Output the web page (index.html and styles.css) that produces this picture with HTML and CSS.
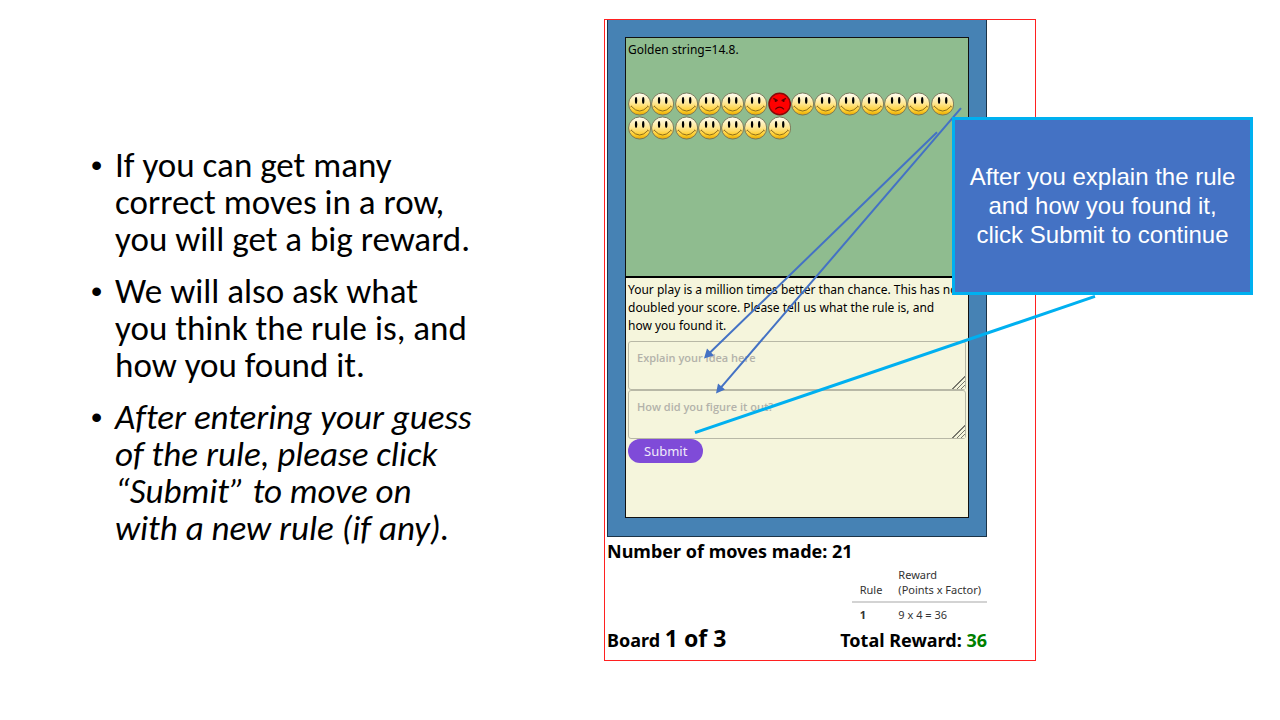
FILE: index.html
```html
<!DOCTYPE html>
<html lang="en">
<head>
<meta charset="utf-8">
<title>Explaining the rule</title>
<link rel="stylesheet" href="styles.css">
</head>
<body>
<main class="slide">
  <ul class="points">
    <li>If you can get many<br>correct moves in a row,<br>you will get a big reward.</li>
    <li>We will also ask what<br>you think the rule is, and<br>how you found it.</li>
    <li class="emphasis">After entering your guess<br>of the rule, please click<br>“Submit” to move on<br>with a new rule (if any).</li>
  </ul>

  <section class="frame">
    <div class="board">
      <div class="play">
        <p class="text">Golden string=14.8.</p>
        <div class="faces" id="faces"></div>
      </div>
      <form class="guess">
        <p class="text">Your play is a million times better than chance. This has now<br>doubled your score. Please tell us what the rule is, and<br>how you found it.</p>
        <textarea class="answer" aria-label="Explain your idea" placeholder="Explain your idea here"></textarea>
        <textarea class="answer" aria-label="How you figured it out" placeholder="How did you figure it out?"></textarea>
        <button class="submit" type="button">Submit</button>
      </form>
    </div>
    <div class="status">
      <h2 class="moves">Number of moves made: 21</h2>
      <table class="rewards">
        <thead><tr><th>Rule</th><th>Reward<br>(Points x Factor)</th></tr></thead>
        <tbody><tr><td><b>1</b></td><td>9 x 4 = 36</td></tr></tbody>
      </table>
      <div class="totals">
        <span>Board <span class="count">1 of 3</span></span>
        <span>Total Reward: <span class="points-won">36</span></span>
      </div>
    </div>
    <svg class="pointers" viewBox="0 0 432 641" preserveAspectRatio="none" aria-hidden="true">
      <g stroke="#4472c4" stroke-width="2" fill="#4472c4">
        <path d="M357 89 116 369M333 113 104 335"/>
        <path stroke="none" d="M112 374 114 364 121 370ZM100 339 103 329 110 336Z"/>
      </g>
      <path d="M491 277 91 413" stroke="#00b0f0" stroke-width="3"/>
    </svg>
    <div class="callout">After you explain the rule<br>and how you found it,<br>click Submit to continue</div>
  </section>
</main>

<svg class="symbols" aria-hidden="true">
  <defs>
    <linearGradient id="gold" x1="0" y1="0" x2="0" y2="1">
      <stop offset="0" stop-color="#fffef5"/>
      <stop offset=".45" stop-color="#ffe99a"/>
      <stop offset=".8" stop-color="#ffce2e"/>
      <stop offset="1" stop-color="#e5a800"/>
    </linearGradient>
    <symbol id="happy" viewBox="0 0 24 24">
      <circle cx="12" cy="12" r="11.400" fill="url(#gold)" stroke="#77765a"/>
      <ellipse cx="8.300" cy="8.300" rx="1.200" ry="3.500"/>
      <ellipse cx="15.700" cy="8.300" rx="1.200" ry="3.500"/>
      <path d="M3.500 14.500Q12 24 20.500 14.500M2.600 15l1.600-1M19.800 14l1.600 1" fill="none" stroke="#8a6a1c"/>
    </symbol>
    <symbol id="angry" viewBox="0 0 24 24">
      <circle cx="12" cy="12" r="11" fill="#f00" stroke="#8a0808" stroke-width="1.500"/>
      <path d="M5.500 6.200 10 8.500M18.500 6.200 14 8.500M7.500 17.500Q12 13 16.500 17.500" fill="none" stroke="#650000" stroke-width="1.300"/>
      <circle cx="8" cy="8.700" r="1.200" fill="#500"/>
      <circle cx="16" cy="8.700" r="1.200" fill="#500"/>
    </symbol>
  </defs>
</svg>
<script src="faces.js"></script>
</body>
</html>
```

FILE: styles.css
```css
* { box-sizing: border-box; }
body { margin: 0; background: #fff; color: #000; font-family: "Noto Sans", "Open Sans", sans-serif; }

.slide {
  display: grid;
  grid-template-columns: minmax(0, 604fr) minmax(0, 432fr) minmax(0, 244fr);
  align-items: start;
  min-height: 100vh;
  padding-top: 19px;
}

.points {
  margin: 128px 0 0;
  padding: 0 0 0 115px;
  list-style: none;
  font: 35px/37px Carlito, Calibri, Lato, sans-serif;
  font-variant-ligatures: none;
}
.points li { position: relative; margin-bottom: 15px; white-space: nowrap; }
.points li::before { content: "•"; position: absolute; left: -24px; font: 32px/37px "Liberation Sans", Arial, sans-serif; }
.emphasis { font-style: italic; }

.frame { position: relative; border: 1px solid #ff2020; padding: 0 48px 5px 2px; }

.board {
  background: #4682b4;
  border: 1px solid #1b3448;
  border-top: 0;
  padding: 17px 17px 18px;
}
.play {
  height: 241px;
  padding: 3px 2px;
  background: #8fbc8f;
  border: 1px solid #111;
  border-bottom: 2px solid #000;
}
.text { margin: 0; font-size: 12px; line-height: 18px; white-space: nowrap; }
.faces { display: grid; grid-template-columns: repeat(14, 1fr); padding: 33px 12px 0 0; }
.face { display: block; width: 100%; height: 24px; }

.guess {
  height: 240px;
  padding: 3px 2px;
  background: #f5f5dc;
  border: 1px solid #111;
  border-top: 0;
  overflow: hidden;
}
.text + .answer { margin-top: 6px; }
.answer {
  display: block;
  width: 100%;
  height: 49px;
  padding: 8px;
  border: 1px solid #b8b8a6;
  border-radius: 3px;
  background: transparent;
  font: 600 11px/16px "Open Sans", sans-serif;
}
.answer::placeholder { color: #b3b2aa; opacity: 1; }
.answer::-webkit-resizer {
  background:
    linear-gradient(135deg, #f5f5dc 55%, transparent 55%),
    repeating-linear-gradient(135deg, #77776c 0 1px, #f5f5dc 1px 3px);
}
.submit {
  display: block;
  height: 24px;
  padding: 0 16px;
  border: 0;
  border-radius: 12px;
  background: #7f4bd8;
  color: #f0eafa;
  font: 13px/24px "Noto Sans", sans-serif;
}

.moves { margin: 0; font-size: 18px; line-height: 28px; }
.rewards { margin-left: auto; border-collapse: collapse; font-size: 11px; line-height: 15px; color: #333; }
.rewards th { padding: 2px 8px 4px; font-weight: 400; text-align: left; vertical-align: bottom; border-bottom: 2px solid #d3d3d3; }
.rewards th:last-child { padding-right: 6px; }
.rewards td { padding: 4px 8px 2px; }
.totals { display: flex; justify-content: space-between; align-items: baseline; font-size: 18px; line-height: 29px; font-weight: 700; white-space: nowrap; }
.count { font-size: 23px; }
.points-won { color: #008000; }

.pointers { position: absolute; top: -1px; left: -1px; width: calc(100% + 2px); height: calc(100% + 2px); overflow: visible; pointer-events: none; }
.callout {
  position: absolute;
  top: 97px;
  left: 347px;
  width: 301px;
  height: 178px;
  padding-bottom: 2px;
  display: flex;
  align-items: center;
  justify-content: center;
  background: #4472c4;
  border: 3px solid #00b0f0;
  color: #fff;
  font: 24px/29px "Liberation Sans", Arial, sans-serif;
  text-align: center;
  white-space: nowrap;
}
.symbols { position: absolute; width: 0; height: 0; }
```

FILE: faces.js
```js
const moves = Array.from({ length: 21 }, (_, i) => (i === 6 ? "angry" : "happy"));
document.getElementById("faces").innerHTML = moves
  .map((mood) => `<svg class="face"><use href="#${mood}"/></svg>`)
  .join("");
```
